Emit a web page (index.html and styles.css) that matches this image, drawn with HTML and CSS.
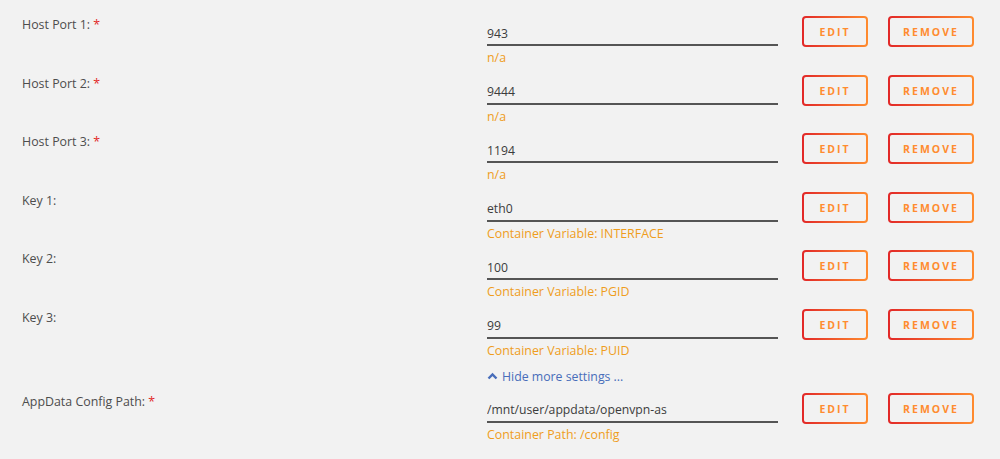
FILE: index.html
```html
<!DOCTYPE html>
<html lang="en">
  <head>
    <meta charset="UTF-8" />
    <meta name="viewport" content="width=device-width, initial-scale=1.0" />
    <title>Container settings</title>
    <link rel="stylesheet" href="styles.css">
  </head>
  <body>
    <div class="settings">
      <div class="row">
        <div class="label">Host Port 1: <span class="req">*</span></div>
        <div class="field">
          <input type="text" value="943" />
          <div class="hint">n/a</div>
        </div>
        <button class="btn btn-edit">EDIT</button>
        <button class="btn btn-remove">REMOVE</button>
      </div>
      <div class="row">
        <div class="label">Host Port 2: <span class="req">*</span></div>
        <div class="field">
          <input type="text" value="9444" />
          <div class="hint">n/a</div>
        </div>
        <button class="btn btn-edit">EDIT</button>
        <button class="btn btn-remove">REMOVE</button>
      </div>
      <div class="row">
        <div class="label">Host Port 3: <span class="req">*</span></div>
        <div class="field">
          <input type="text" value="1194" />
          <div class="hint">n/a</div>
        </div>
        <button class="btn btn-edit">EDIT</button>
        <button class="btn btn-remove">REMOVE</button>
      </div>
      <div class="row">
        <div class="label">Key 1:</div>
        <div class="field">
          <input type="text" value="eth0" />
          <div class="hint">Container Variable: INTERFACE</div>
        </div>
        <button class="btn btn-edit">EDIT</button>
        <button class="btn btn-remove">REMOVE</button>
      </div>
      <div class="row">
        <div class="label">Key 2:</div>
        <div class="field">
          <input type="text" value="100" />
          <div class="hint">Container Variable: PGID</div>
        </div>
        <button class="btn btn-edit">EDIT</button>
        <button class="btn btn-remove">REMOVE</button>
      </div>
      <div class="row">
        <div class="label">Key 3:</div>
        <div class="field">
          <input type="text" value="99" />
          <div class="hint">Container Variable: PUID</div>
        </div>
        <button class="btn btn-edit">EDIT</button>
        <button class="btn btn-remove">REMOVE</button>
      </div>

      <div class="toggle-row">
        <a class="toggle" href="#">
          <svg width="11" height="8" viewBox="0 0 11 8">
            <polyline points="1.5,6.5 5.5,2.5 9.5,6.5" fill="none" stroke="#486dba" stroke-width="2.4" />
          </svg>
          Hide more settings ...
        </a>
      </div>

      <div class="row">
        <div class="label">AppData Config Path: <span class="req">*</span></div>
        <div class="field">
          <input type="text" value="/mnt/user/appdata/openvpn-as" />
          <div class="hint">Container Path: /config</div>
        </div>
        <button class="btn btn-edit">EDIT</button>
        <button class="btn btn-remove">REMOVE</button>
      </div>
    </div>
  </body>
</html>
```

FILE: styles.css
```css
body {
  margin: 0;
  background: #f2f2f2;
  font-family: "Open Sans", "Noto Sans", sans-serif;
  color: #4a4a4a;
}

.settings {
  padding: 8px 0 0 22px;
}

.row {
  display: flex;
  align-items: flex-start;
  height: 58.6px;
}

.label {
  width: 465px;
  padding-top: 8px;
  font-size: 12.4px;
  line-height: 17px;
  color: #4d4d4d;
}

.req {
  color: #e22828;
}

.field {
  width: 291px;
  margin-top: 14px;
}

.field input {
  display: block;
  box-sizing: border-box;
  width: 100%;
  height: 24px;
  margin: 0;
  padding: 0;
  border: none;
  border-bottom: 2px solid #555;
  background: transparent;
  font-family: inherit;
  font-size: 12.2px;
  color: #3c3c3c;
  outline: none;
}

.hint {
  margin-top: 4px;
  font-size: 12.4px;
  line-height: 16px;
  color: #ef9d1c;
}

.btn {
  box-sizing: border-box;
  height: 31px;
  margin-top: 8px;
  padding: 1px 0 0;
  border: 2px solid transparent;
  border-radius: 4px;
  background: linear-gradient(#f2f2f2, #f2f2f2) padding-box,
    linear-gradient(90deg, #e22828, #ff8c2f) border-box;
  color: #ff8c2f;
  font-family: inherit;
  font-size: 10.5px;
  font-weight: 700;
  letter-spacing: 2px;
  cursor: pointer;
}

.btn-edit {
  width: 66px;
  margin-left: 24px;
}

.btn-remove {
  width: 86px;
  margin-left: 20px;
}

.toggle-row {
  height: 25.4px;
  padding-left: 465px;
  box-sizing: border-box;
  padding-top: 8px;
}

.toggle {
  display: flex;
  align-items: center;
  gap: 4px;
  font-size: 12.3px;
  line-height: 17px;
  color: #486dba;
  text-decoration: none;
}
```
